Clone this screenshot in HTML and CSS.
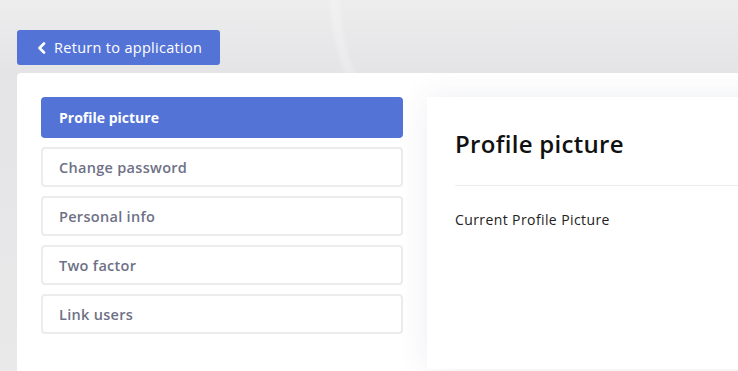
FILE: index.html
```html
<!DOCTYPE html>
<html lang="en">
<head>
  <meta charset="UTF-8">
  <title>Account settings</title>
  <link rel="stylesheet" href="styles.css">
</head>
<body>
  <div class="page">
    <a class="back-btn" href="#">
      <svg width="9" height="12" viewBox="0 0 9 12"><path d="M7 1.5 L2.5 6 L7 10.5" fill="none" stroke="#fff" stroke-width="2.6" stroke-linecap="round" stroke-linejoin="round"/></svg>
      Return to application
    </a>

    <div class="card">
      <nav class="side-nav">
        <a class="nav-item active" href="#">Profile picture</a>
        <a class="nav-item" href="#">Change password</a>
        <a class="nav-item" href="#">Personal info</a>
        <a class="nav-item" href="#">Two factor</a>
        <a class="nav-item" href="#">Link users</a>
      </nav>

      <section class="panel">
        <h2>Profile picture</h2>
        <p>Current Profile Picture</p>
      </section>
    </div>
  </div>
</body>
</html>
```

FILE: styles.css
```css
* { margin: 0; padding: 0; box-sizing: border-box; }

body {
  font-family: 'Open Sans', 'Noto Sans', sans-serif;
  background: linear-gradient(180deg, #ededee 0%, #e4e4e6 20%, #e9e9ea 100%);
  overflow: hidden;
  height: 371px;
}

.page {
  padding: 30px 0 0 17px;
  width: 1100px;
  position: relative;
}

/* faint light streak behind the header */
.page::before {
  content: "";
  position: absolute;
  top: -300px; left: 330px;
  width: 1000px; height: 600px;
  border-left: 10px solid rgba(255,255,255,0.25);
  border-radius: 50%;
  filter: blur(2px);
  pointer-events: none;
}

.back-btn {
  display: inline-flex; align-items: center; gap: 8px;
  height: 35px; width: 203px;
  padding: 0 0 0 20px;
  background: #5473d6; color: #fff;
  border-radius: 3px;
  font-size: 14.5px;
  text-decoration: none;
  letter-spacing: 0.3px;
  position: relative;
}

.card {
  margin-top: 8px;
  background: #fff;
  border-radius: 4px 0 0 0;
  padding: 24px;
  display: flex; gap: 24px;
  height: 320px;
  position: relative;
}

.side-nav {
  width: 362px;
  display: flex; flex-direction: column; gap: 9px;
}

.nav-item {
  display: flex; align-items: center;
  height: 40px;
  padding: 0 16px;
  border: 2px solid #ececee;
  border-radius: 4px;
  color: #6e7186;
  font-size: 14.5px; font-weight: 600;
  text-decoration: none;
  letter-spacing: 0.3px;
}

.nav-item.active {
  height: 41px;
  background: #5473d6; border-color: #5473d6;
  color: #fff; font-weight: 700;
  font-size: 14px; letter-spacing: 0;
}

.panel {
  flex: 1;
  background: #fff;
  padding: 30px 28px;
  box-shadow: 0 0 30px rgba(60, 70, 110, 0.09);
}

.panel h2 {
  font-size: 24px; font-weight: 600; color: #111;
  padding-bottom: 25px;
  border-bottom: 1px solid #ececee;
  letter-spacing: 0.3px;
}

.panel p {
  margin-top: 24px;
  font-size: 14px; color: #222;
  letter-spacing: 0.4px;
}
```
